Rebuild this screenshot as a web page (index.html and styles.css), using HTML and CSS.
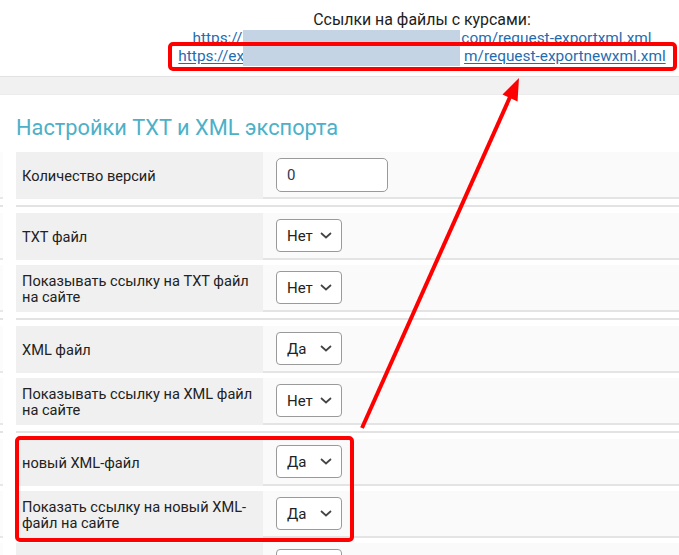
FILE: index.html
```html
<!DOCTYPE html>
<html lang="ru">
<head>
<meta charset="utf-8">
<title>Настройки TXT и XML экспорта</title>
<link rel="stylesheet" href="styles.css">
</head>
<body>
<div class="top">
  <div class="links">
    <div class="links-title">Ссылки на файлы с курсами:</div>
    <div class="link-line"><a class="link">https://<span class="hide h1"></span>com/request-exportxml.xml</a></div>
    <div class="link-line"><a class="link under">https://ex<span class="hide h2"></span>m/request-exportnewxml.xml</a></div>
  </div>
  <div class="blur"></div>
  <div class="mark mark-top"></div>
</div>
<div class="band"></div>
<h2 class="title">Настройки TXT и XML экспорта</h2>

<div class="group">
  <div class="row">
    <div class="strip"></div>
    <div class="label">Количество версий</div>
    <div class="value"><div class="input">0</div></div>
  </div>
</div>

<div class="sep"><i></i><b></b></div>
<div class="group">
  <div class="row">
    <div class="strip"></div>
    <div class="label">TXT файл</div>
    <div class="value"><div class="select"><span>Нет</span><svg class="chev" viewBox="0 0 12 7"><path d="M1 1 L6 5.5 L11 1"/></svg></div></div>
  </div>
  <div class="row">
    <div class="strip"></div>
    <div class="label">Показывать ссылку на TXT файл на сайте</div>
    <div class="value"><div class="select"><span>Нет</span><svg class="chev" viewBox="0 0 12 7"><path d="M1 1 L6 5.5 L11 1"/></svg></div></div>
  </div>
</div>

<div class="sep"><i></i><b></b></div>
<div class="group">
  <div class="row">
    <div class="strip"></div>
    <div class="label">XML файл</div>
    <div class="value"><div class="select"><span>Да</span><svg class="chev" viewBox="0 0 12 7"><path d="M1 1 L6 5.5 L11 1"/></svg></div></div>
  </div>
  <div class="row">
    <div class="strip"></div>
    <div class="label">Показывать ссылку на XML файл на сайте</div>
    <div class="value"><div class="select"><span>Нет</span><svg class="chev" viewBox="0 0 12 7"><path d="M1 1 L6 5.5 L11 1"/></svg></div></div>
  </div>
</div>

<div class="sep"><i></i><b></b></div>
<div class="group">
  <div class="row">
    <div class="strip"></div>
    <div class="label">новый XML-файл</div>
    <div class="value"><div class="select"><span>Да</span><svg class="chev" viewBox="0 0 12 7"><path d="M1 1 L6 5.5 L11 1"/></svg></div></div>
  </div>
  <div class="row">
    <div class="strip"></div>
    <div class="label">Показать ссылку на новый XML-файл на сайте</div>
    <div class="value"><div class="select"><span>Да</span><svg class="chev" viewBox="0 0 12 7"><path d="M1 1 L6 5.5 L11 1"/></svg></div></div>
  </div>
  <div class="row">
    <div class="strip"></div>
    <div class="label"></div>
    <div class="value"><div class="select"><span></span></div></div>
  </div>
</div>

<div class="mark mark-rows"></div>
<svg class="arrow" width="679" height="555" viewBox="0 0 679 555">
  <line x1="362" y1="428" x2="510" y2="97" stroke="#ff0000" stroke-width="4"/>
  <polygon points="519,78 517.5,101.5 502.5,94.5" fill="#ff0000"/>
</svg>
</body>
</html>
```

FILE: styles.css
```css
* { box-sizing: border-box; }

html, body {
  margin: 0;
  padding: 0;
  background: #ffffff;
  font-family: Roboto, "Liberation Sans", sans-serif;
  color: #222222;
  overflow: hidden;
}

body {
  position: relative;
  width: 679px;
  height: 555px;
}

.top {
  position: relative;
  height: 77px;
  padding-top: 11px;
  border-bottom: 1px solid #e2e2e2;
  background: #ffffff;
}

.links {
  margin-left: 165px;
  text-align: center;
  font-size: 15.4px;
  line-height: 18px;
}

.links-title {
  color: #1e1e1e;
  font-size: 15.9px;
}

.link {
  color: #1f6db0;
  text-decoration: none;
}

.link.under {
  text-decoration: underline;
  text-underline-offset: 2px;
}

.hide {
  display: inline-block;
  height: 1px;
}

.h1 { width: 219px; }
.h2 { width: 220px; }

.blur {
  position: absolute;
  left: 243px;
  top: 30px;
  width: 217px;
  height: 36px;
  background: #c4d4e5;
}

.mark {
  position: absolute;
  border: 4px solid #ff0000;
  border-radius: 5px;
}

.mark-top {
  left: 168px;
  top: 42px;
  width: 509px;
  height: 29px;
}

.mark-rows {
  left: 15px;
  top: 436px;
  width: 339px;
  height: 106px;
}

.band {
  height: 18px;
  background: #f1f1f1;
  border-bottom: 1px solid #ececec;
}

.title {
  margin: 20px 0 0 0;
  padding-left: 16px;
  font-size: 21.8px;
  line-height: 26px;
  font-weight: 400;
  color: #4cb1c8;
  height: 37px;
}

.group {
  display: flex;
  flex-direction: column;
  gap: 5px;
  padding: 0;
}

.sep {
  display: flex;
  margin: 6px 0;
  height: 2px;
}

.sep i {
  width: 3px;
  background: #e3e3e3;
}

.sep b {
  flex: 1;
  margin-left: 13px;
  background: #e3e3e3;
}

.row {
  display: flex;
  height: 47px;
}

.strip {
  width: 3px;
  margin-right: 13px;
  background: #fcfcfc;
  border-bottom: 2px solid #e8e8e8;
}

.label {
  width: 247px;
  display: flex;
  align-items: center;
  padding: 0 10px 0 6px;
  background: #f0f0f0;
  font-size: 14.6px;
  line-height: 16px;
  color: #222222;
}

.value {
  flex: 1;
  display: flex;
  align-items: center;
  padding-left: 13px;
  background: #fafafa;
  border-bottom: 2px solid #e4e4e4;
}

.input {
  width: 112px;
  height: 34px;
  border: 1px solid #9a9a9a;
  border-radius: 5px;
  background: #ffffff;
  padding: 7px 0 0 10px;
  font-size: 15px;
  line-height: 18px;
  color: #2b3a55;
}

.select {
  width: 66px;
  height: 33px;
  border: 1px solid #9a9a9a;
  border-radius: 4px;
  background: #ffffff;
  display: flex;
  align-items: center;
  justify-content: space-between;
  padding: 0 9px 0 10px;
  font-size: 15px;
  color: #222222;
}

.chev {
  width: 12px;
  height: 7px;
  fill: none;
  stroke: #444444;
  stroke-width: 1.7;
}

.arrow {
  position: absolute;
  left: 0;
  top: 0;
  pointer-events: none;
}
```
